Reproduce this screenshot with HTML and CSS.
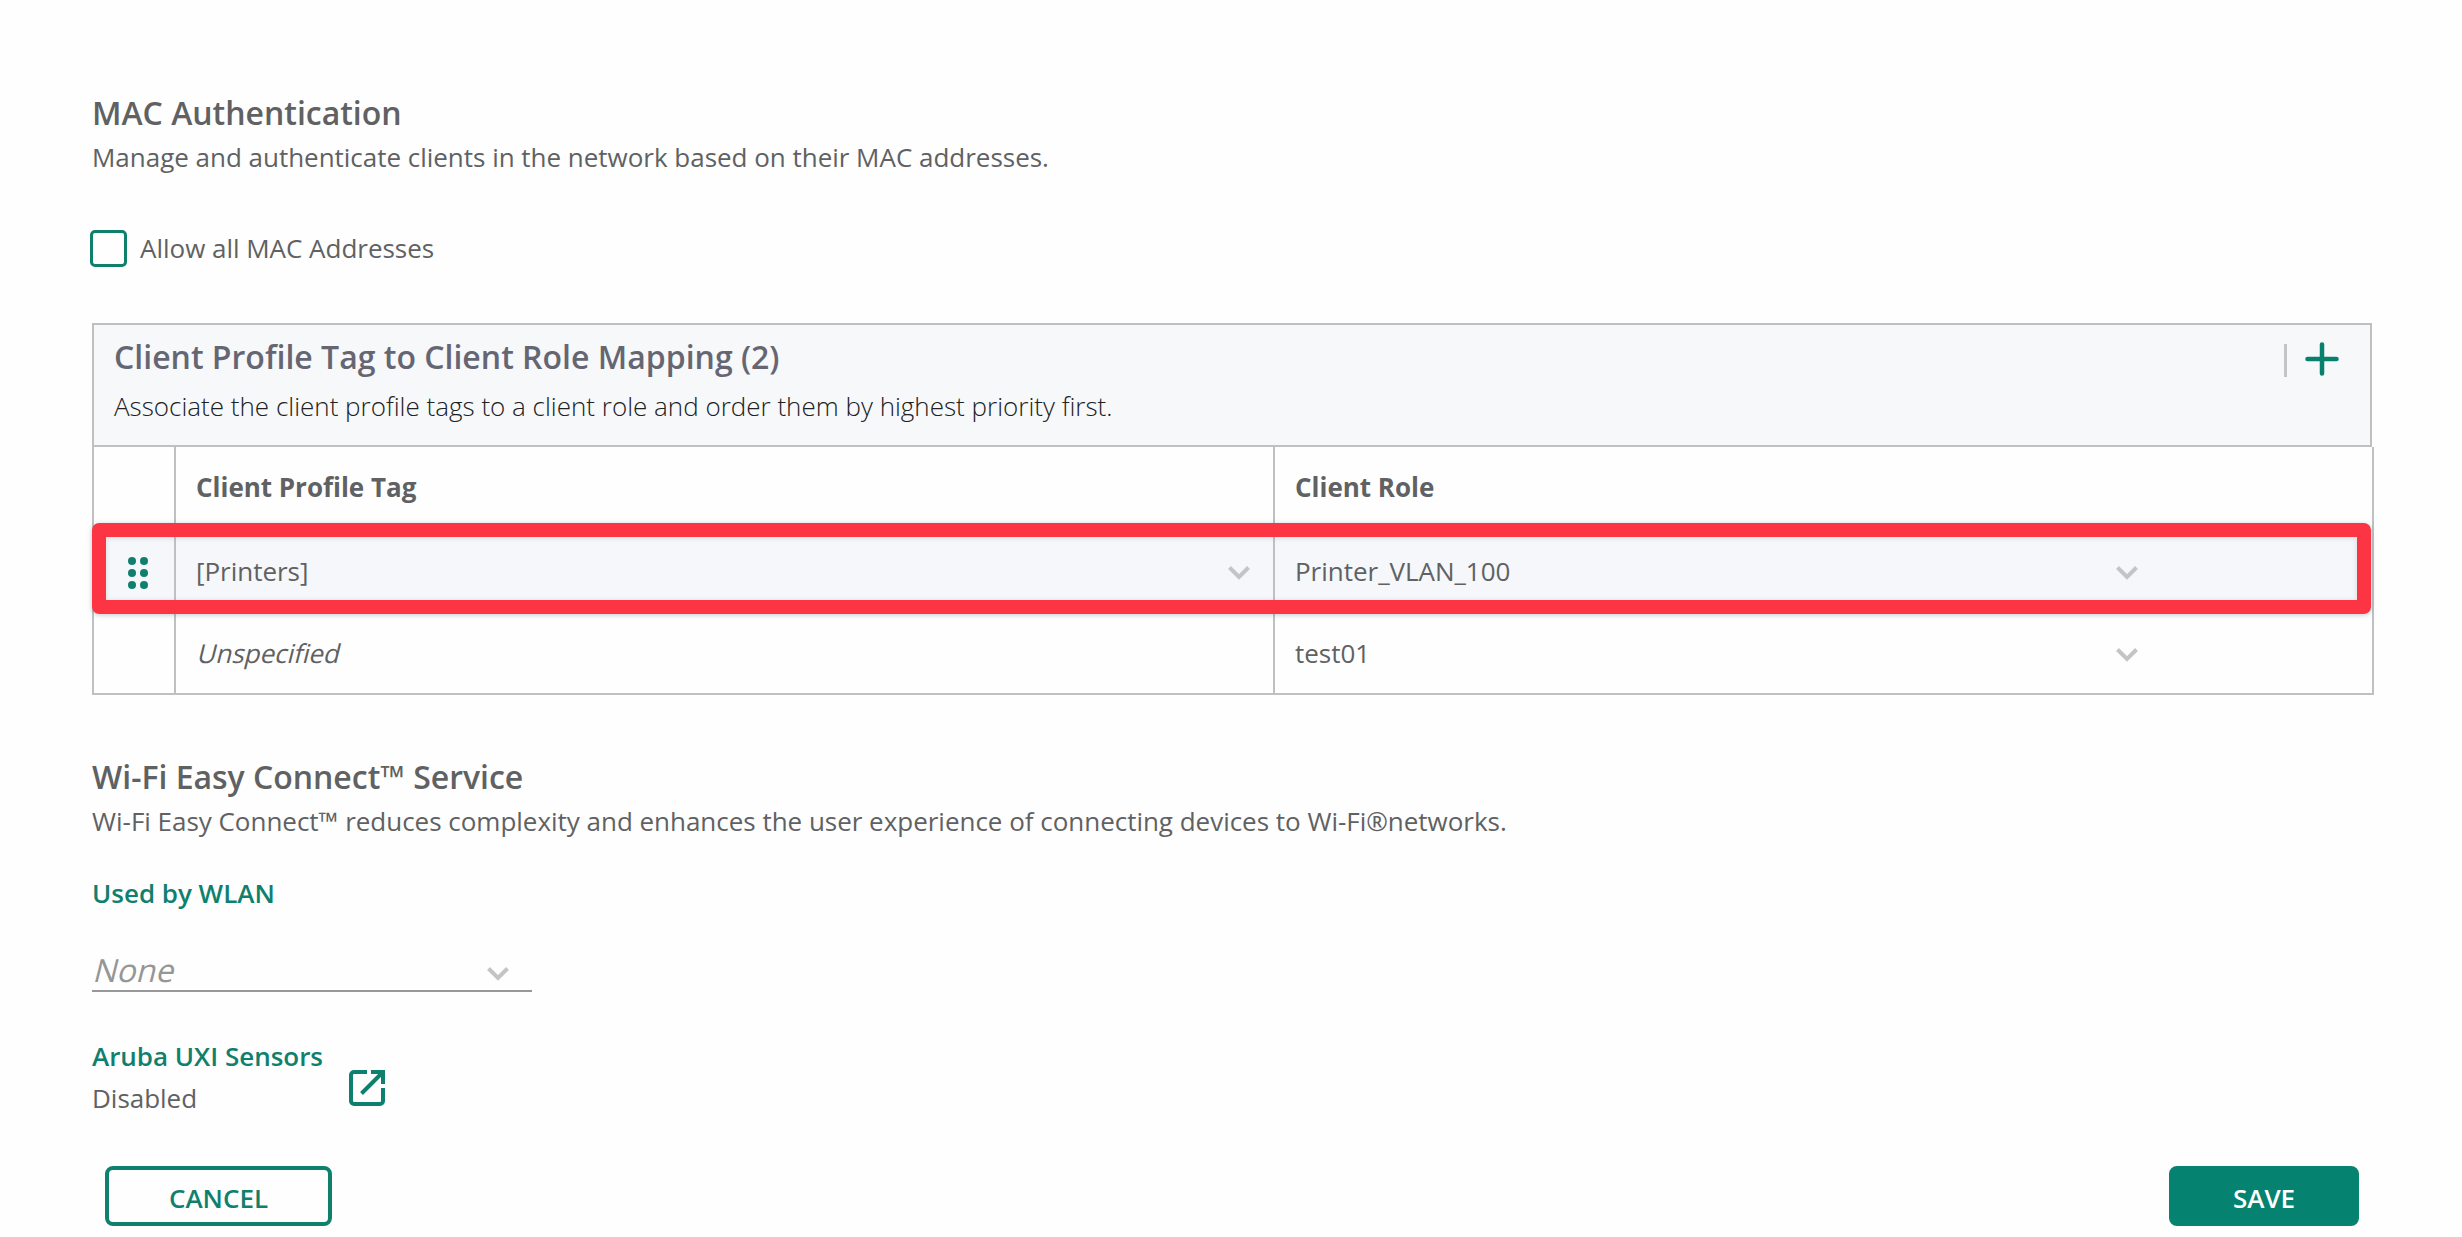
FILE: index.html
```html
<!DOCTYPE html>
<html lang="en">
<head>
    <meta charset="UTF-8">
    <meta name="viewport" content="width=device-width, initial-scale=1.0">
    <title>MAC Authentication</title>
    <link rel="stylesheet" href="styles.css">
</head>
<body>
    <main class="page">
        <section class="mac-auth">
            <h1>MAC Authentication</h1>
            <p class="intro">Manage and authenticate clients in the network based on their MAC addresses.</p>
            <label class="check-row">
                <input type="checkbox">
                <span>Allow all MAC Addresses</span>
            </label>
        </section>

        <section class="mapping">
            <div class="mapping-header">
                <div>
                    <h2>Client Profile Tag to Client Role Mapping (2)</h2>
                    <p class="mapping-desc">Associate the client profile tags to a client role and order them by highest priority first.</p>
                </div>
                <div class="mapping-actions">
                    <svg class="plus" viewBox="0 0 34 34"><path d="M17 2.5v29M2.5 17h29"/></svg>
                </div>
            </div>
            <div class="table">
                <div class="row head">
                    <div class="cell"></div>
                    <div class="cell">Client Profile Tag</div>
                    <div class="cell">Client Role</div>
                </div>
                <div class="row active">
                    <div class="cell drag">
                        <svg viewBox="0 0 20 34">
                            <circle cx="4" cy="5" r="4"/><circle cx="16" cy="5" r="4"/>
                            <circle cx="4" cy="17" r="4"/><circle cx="16" cy="17" r="4"/>
                            <circle cx="4" cy="29" r="4"/><circle cx="16" cy="29" r="4"/>
                        </svg>
                    </div>
                    <div class="cell tag">
                        <span>[Printers]</span>
                        <svg class="chevron" viewBox="0 0 22 14"><path d="M1.5 1.5 11 11l9.500-9.500"/></svg>
                    </div>
                    <div class="cell role">
                        <span>Printer_VLAN_100</span>
                        <svg class="chevron" viewBox="0 0 22 14"><path d="M1.5 1.5 11 11l9.500-9.500"/></svg>
                    </div>
                </div>
                <div class="row">
                    <div class="cell"></div>
                    <div class="cell"><span class="slanted">Unspecified</span></div>
                    <div class="cell role">
                        <span>test01</span>
                        <svg class="chevron" viewBox="0 0 22 14"><path d="M1.5 1.5 11 11l9.500-9.500"/></svg>
                    </div>
                </div>
            </div>
            <div class="highlight"></div>
        </section>

        <section class="easy-connect">
            <h1>Wi-Fi Easy Connect™ Service</h1>
            <p class="intro">Wi-Fi Easy Connect™ reduces complexity and enhances the user experience of connecting devices to Wi-Fi®networks.</p>
            <h3>Used by WLAN</h3>
            <div class="select">
                <span class="slanted">None</span>
                <svg class="chevron" viewBox="0 0 22 14"><path d="M1.5 1.5 11 11l9.500-9.500"/></svg>
            </div>
            <div class="sensors">
                <div>
                    <h3>Aruba UXI Sensors</h3>
                    <p>Disabled</p>
                </div>
                <svg class="open-icon" viewBox="0 0 36 36">
                    <path d="M18 2H5a3 3 0 0 0-3 3v26a3 3 0 0 0 3 3h26a3 3 0 0 0 3-3V18"/>
                    <path d="M22 2h12v12M33 3 12.500 23.500"/>
                </svg>
            </div>
        </section>

        <div class="buttons">
            <button class="cancel">CANCEL</button>
            <button class="save">SAVE</button>
        </div>
    </main>
</body>
</html>
```
FILE: styles.css
```css
* {
    box-sizing: border-box;
}
body {
    margin: 0;
    background-color: #fefefe;
    color: #606162;
    font-family: 'Open Sans', sans-serif;
    font-size: 26px;
    line-height: 42px;
    letter-spacing: -0.02px;
}
h1, h2, h3, p {
    margin: 0;
}
.page {
    width: 2282px;
    margin-left: 92px;
    padding-top: 91px;
}
h1 {
    font-size: 32px;
    font-weight: 600;
    line-height: 44px;
}
h3 {
    color: #10806e;
    font-size: 26px;
    font-weight: 600;
    line-height: 42px;
}
.intro {
    margin-top: 1px;
}
.check-row {
    display: flex;
    align-items: center;
    gap: 13px;
    height: 42px;
    margin: 49px 0 0 -2px;
}
.check-row input {
    appearance: none;
    width: 37px;
    height: 37px;
    margin: 0;
    border: 3px solid #10806e;
    border-radius: 5px;
}

.mapping {
    position: relative;
    margin-top: 54px;
}
.mapping-header {
    display: flex;
    justify-content: space-between;
    width: 2280px;
    height: 124px;
    padding: 10px 31px 0 20px;
    border: 2px solid #bfc0c1;
    background-color: #f6f8fa;
    letter-spacing: 0;
}
.mapping-header h2 {
    color: #666673;
    font-size: 32px;
    font-weight: 600;
    line-height: 44px;
}
.mapping-desc {
    margin-top: 6px;
    color: #202122;
    font-weight: 300;
    line-height: 42px;
}
.mapping-actions {
    height: 33px;
    margin-top: 9px;
    padding-left: 18px;
    border-left: 3px solid #c3c4c6;
}
.plus {
    display: block;
    width: 34px;
    height: 34px;
    margin-top: -2px;
    fill: none;
    stroke: #08806e;
    stroke-width: 4.5;
    stroke-linecap: round;
}
.table {
    border: 2px solid #bfc0c1;
    border-top: none;
}
.row {
    display: grid;
    grid-template-columns: 80px 1099px 1fr;
    height: 82px;
}
.cell {
    display: flex;
    align-items: center;
    padding-left: 20px;
}
.cell + .cell {
    border-left: 2px solid #bfc0c1;
}
.cell span {
    padding-top: 1px;
}
.head {
    font-weight: 700;
    line-height: 40px;
}
.head .cell {
    padding-bottom: 2px;
}
.active {
    background-color: #f5f7fa;
}
.drag {
    padding-left: 34px;
}
.drag svg {
    width: 20px;
    height: 34px;
    margin-top: 6px;
    fill: #10806e;
}
.tag, .role {
    justify-content: space-between;
}
.tag {
    padding-right: 23px;
}
.role {
    padding-right: 234px;
}
/* regular face slanted about its baseline */
.slanted {
    display: inline-block;
    transform: skewX(-14deg);
    transform-origin: 0 75%;
}
.chevron {
    width: 22px;
    height: 14px;
    margin-top: 6px;
    fill: none;
    stroke: #c3c4c5;
    stroke-width: 4;
}
/* red frame over the printers row */
.highlight {
    position: absolute;
    top: 200px;
    left: 0;
    width: 2279px;
    height: 91px;
    border: 14px solid #fc3544;
    border-radius: 7px;
    box-shadow: 0 1px 5px rgba(90, 100, 110, 0.35), inset 0 1px 5px rgba(90, 100, 110, 0.2);
}

.easy-connect {
    margin-top: 60px;
}
.easy-connect > h3 {
    margin-top: 30px;
}
.select {
    display: flex;
    justify-content: space-between;
    align-items: center;
    width: 440px;
    height: 48px;
    margin-top: 30px;
    padding: 7px 23px 0 0;
    border-bottom: 2px solid #989898;
    color: #969696;
    font-size: 32px;
}
.select span {
    padding-bottom: 2px;
}
.sensors {
    display: flex;
    gap: 26px;
    margin-top: 43px;
}
.open-icon {
    width: 36px;
    height: 36px;
    margin-top: 35px;
    fill: none;
    stroke: #10806e;
    stroke-width: 4;
}
.buttons {
    display: flex;
    justify-content: space-between;
    margin: 47px 15px 0 13px;
}
.buttons button {
    height: 60px;
    border: 4px solid #10806e;
    border-radius: 8px;
    font-family: inherit;
    font-size: 26px;
    font-weight: 600;
    padding: 3px 0 0;
}
.cancel {
    width: 227px;
    background-color: #fefefe;
    color: #10806e;
}
.buttons .save {
    width: 190px;
    border-color: #068270;
    background-color: #068270;
    color: white;
}
```
